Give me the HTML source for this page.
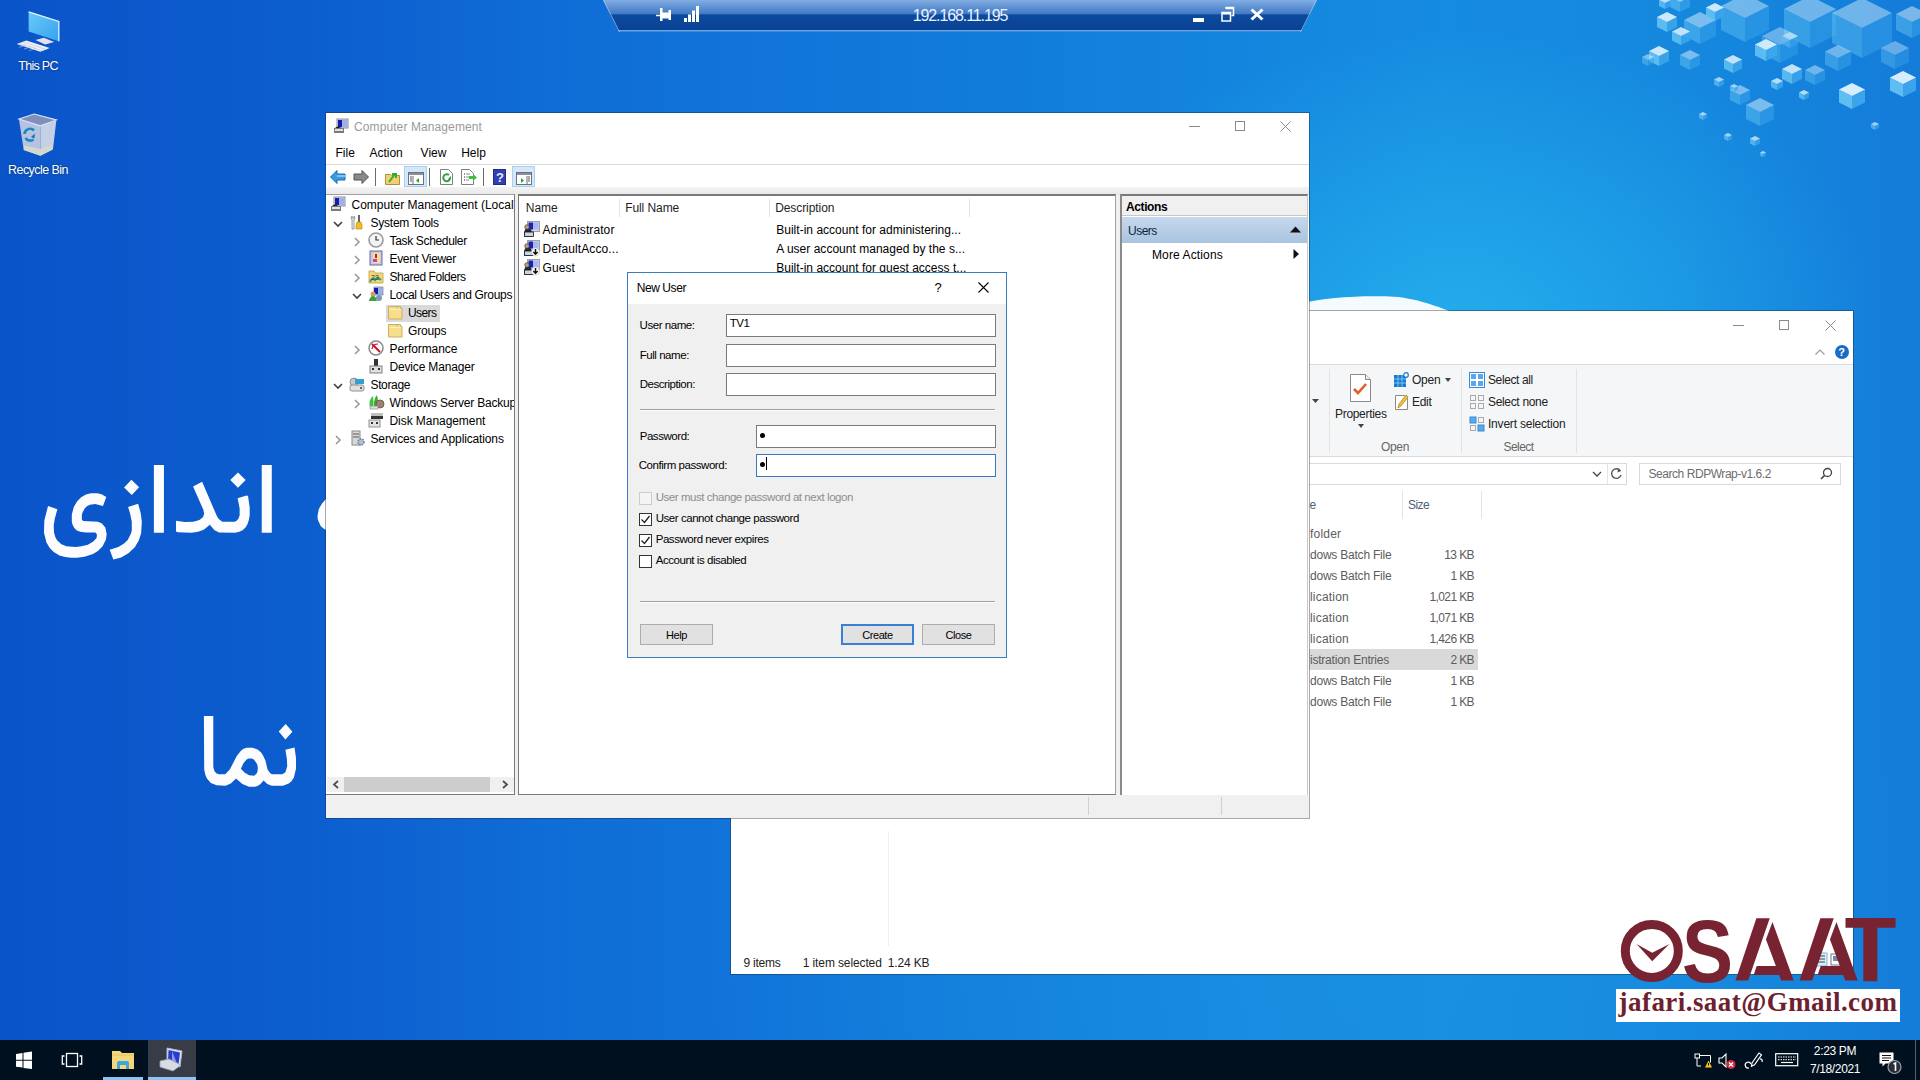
<!DOCTYPE html>
<html><head><meta charset="utf-8">
<style>
*{box-sizing:border-box;margin:0;padding:0}
html,body{width:1920px;height:1080px;overflow:hidden}
body{position:relative;font-family:"Liberation Sans",sans-serif;font-size:12px;color:#000;
background:linear-gradient(90deg,rgb(10,84,201) 0%,rgb(12,93,206) 15%,rgb(16,110,215) 30%,rgb(18,128,220) 57%,rgb(22,140,224) 75%,rgb(21,136,222) 88%,rgb(20,124,217) 100%);}
.a{position:absolute}
.t{position:absolute;white-space:nowrap;line-height:1}
svg.a{overflow:visible}
</style></head><body>
<div class="a" style="left:0;top:0;width:1920px;height:1040px;background:radial-gradient(ellipse 420px 300px at 1460px 330px,rgba(38,178,238,.85),rgba(38,178,238,0)),radial-gradient(ellipse 600px 700px at 1300px 900px,rgba(30,150,228,.5),rgba(30,150,228,0))"></div>
<svg class="a" style="left:0;top:0" width="1920" height="400"><path d="M1300 303.5C1325 298 1350 295.8 1385 296.3 1410 297 1425 302 1452 312H1300z" fill="#f4fbff"/></svg>
<svg class="a" style="left:0;top:0" width="1920" height="200"><g opacity="0.45"><path d="M1721 6.0 L1745 18 L1745 42 L1721 30.0 Z" fill="#62c2f4"/><path d="M1745 18 L1769 6.0 L1769 30.0 L1745 42 Z" fill="#3ea6ec"/><path d="M1721 6.0 L1745 -6 L1769 6.0 L1745 18 Z" fill="#dff4ff"/></g><g opacity="0.45"><path d="M1784 9.0 L1810 22 L1810 48 L1784 35.0 Z" fill="#62c2f4"/><path d="M1810 22 L1836 9.0 L1836 35.0 L1810 48 Z" fill="#3ea6ec"/><path d="M1784 9.0 L1810 -4 L1836 9.0 L1810 22 Z" fill="#dff4ff"/></g><g opacity="0.45"><path d="M1832 13.0 L1862 28 L1862 58 L1832 43.0 Z" fill="#62c2f4"/><path d="M1862 28 L1892 13.0 L1892 43.0 L1862 58 Z" fill="#3ea6ec"/><path d="M1832 13.0 L1862 -2 L1892 13.0 L1862 28 Z" fill="#dff4ff"/></g><g opacity="0.5"><path d="M1684 20.0 L1700 28 L1700 44 L1684 36.0 Z" fill="#62c2f4"/><path d="M1700 28 L1716 20.0 L1716 36.0 L1700 44 Z" fill="#3ea6ec"/><path d="M1684 20.0 L1700 12 L1716 20.0 L1700 28 Z" fill="#dff4ff"/></g><g opacity="0.5"><path d="M1746 105.0 L1760 112 L1760 126 L1746 119.0 Z" fill="#62c2f4"/><path d="M1760 112 L1774 105.0 L1774 119.0 L1760 126 Z" fill="#3ea6ec"/><path d="M1746 105.0 L1760 98 L1774 105.0 L1760 112 Z" fill="#dff4ff"/></g><g opacity="0.5"><path d="M1896 14.0 L1912 22 L1912 38 L1896 30.0 Z" fill="#62c2f4"/><path d="M1912 22 L1928 14.0 L1928 30.0 L1912 38 Z" fill="#3ea6ec"/><path d="M1896 14.0 L1912 6 L1928 14.0 L1912 22 Z" fill="#dff4ff"/></g><g opacity="0.45"><path d="M1825 51.5 L1838 58 L1838 71 L1825 64.5 Z" fill="#62c2f4"/><path d="M1838 58 L1851 51.5 L1851 64.5 L1838 71 Z" fill="#3ea6ec"/><path d="M1825 51.5 L1838 45 L1851 51.5 L1838 58 Z" fill="#dff4ff"/></g><g opacity="0.4"><path d="M1762 36.0 L1780 45 L1780 63 L1762 54.0 Z" fill="#62c2f4"/><path d="M1780 45 L1798 36.0 L1798 54.0 L1780 63 Z" fill="#3ea6ec"/><path d="M1762 36.0 L1780 27 L1798 36.0 L1780 45 Z" fill="#dff4ff"/></g><g opacity="0.4"><path d="M1881 48.0 L1895 55 L1895 69 L1881 62.0 Z" fill="#62c2f4"/><path d="M1895 55 L1909 48.0 L1909 62.0 L1895 69 Z" fill="#3ea6ec"/><path d="M1881 48.0 L1895 41 L1909 48.0 L1895 55 Z" fill="#dff4ff"/></g><g opacity="0.5"><path d="M1680 55.0 L1690 60 L1690 70 L1680 65.0 Z" fill="#62c2f4"/><path d="M1690 60 L1700 55.0 L1700 65.0 L1690 70 Z" fill="#3ea6ec"/><path d="M1680 55.0 L1690 50 L1700 55.0 L1690 60 Z" fill="#dff4ff"/></g><g opacity="0.5"><path d="M1730 90.0 L1740 95 L1740 105 L1730 100.0 Z" fill="#62c2f4"/><path d="M1740 95 L1750 90.0 L1750 100.0 L1740 105 Z" fill="#3ea6ec"/><path d="M1730 90.0 L1740 85 L1750 90.0 L1740 95 Z" fill="#dff4ff"/></g><g opacity="0.45"><path d="M1805 70.0 L1815 75 L1815 85 L1805 80.0 Z" fill="#62c2f4"/><path d="M1815 75 L1825 70.0 L1825 80.0 L1815 85 Z" fill="#3ea6ec"/><path d="M1805 70.0 L1815 65 L1825 70.0 L1815 75 Z" fill="#dff4ff"/></g><g opacity="0.6"><path d="M1670 -3.0 L1680 2 L1680 12 L1670 7.0 Z" fill="#62c2f4"/><path d="M1680 2 L1690 -3.0 L1690 7.0 L1680 12 Z" fill="#3ea6ec"/><path d="M1670 -3.0 L1680 -8 L1690 -3.0 L1680 2 Z" fill="#dff4ff"/></g><g opacity="0.9"><path d="M1657 17.0 L1667 22 L1667 32 L1657 27.0 Z" fill="#62c2f4"/><path d="M1667 22 L1677 17.0 L1677 27.0 L1667 32 Z" fill="#3ea6ec"/><path d="M1657 17.0 L1667 12 L1677 17.0 L1667 22 Z" fill="#dff4ff"/></g><g opacity="0.85"><path d="M1672 31.5 L1681 36 L1681 45 L1672 40.5 Z" fill="#62c2f4"/><path d="M1681 36 L1690 31.5 L1690 40.5 L1681 45 Z" fill="#3ea6ec"/><path d="M1672 31.5 L1681 27 L1690 31.5 L1681 36 Z" fill="#dff4ff"/></g><g opacity="0.9"><path d="M1649 51.0 L1659 56 L1659 66 L1649 61.0 Z" fill="#62c2f4"/><path d="M1659 56 L1669 51.0 L1669 61.0 L1659 66 Z" fill="#3ea6ec"/><path d="M1649 51.0 L1659 46 L1669 51.0 L1659 56 Z" fill="#dff4ff"/></g><g opacity="0.9"><path d="M1706 7.5 L1715 12 L1715 21 L1706 16.5 Z" fill="#62c2f4"/><path d="M1715 12 L1724 7.5 L1724 16.5 L1715 21 Z" fill="#3ea6ec"/><path d="M1706 7.5 L1715 3 L1724 7.5 L1715 12 Z" fill="#dff4ff"/></g><g opacity="0.9"><path d="M1755 44.5 L1766 50 L1766 61 L1755 55.5 Z" fill="#62c2f4"/><path d="M1766 50 L1777 44.5 L1777 55.5 L1766 61 Z" fill="#3ea6ec"/><path d="M1755 44.5 L1766 39 L1777 44.5 L1766 50 Z" fill="#dff4ff"/></g><g opacity="0.85"><path d="M1724 59.5 L1733 64 L1733 73 L1724 68.5 Z" fill="#62c2f4"/><path d="M1733 64 L1742 59.5 L1742 68.5 L1733 73 Z" fill="#3ea6ec"/><path d="M1724 59.5 L1733 55 L1742 59.5 L1733 64 Z" fill="#dff4ff"/></g><g opacity="0.85"><path d="M1782 69.0 L1792 74 L1792 84 L1782 79.0 Z" fill="#62c2f4"/><path d="M1792 74 L1802 69.0 L1802 79.0 L1792 84 Z" fill="#3ea6ec"/><path d="M1782 69.0 L1792 64 L1802 69.0 L1792 74 Z" fill="#dff4ff"/></g><g opacity="0.95"><path d="M1839 89.5 L1852 96 L1852 109 L1839 102.5 Z" fill="#62c2f4"/><path d="M1852 96 L1865 89.5 L1865 102.5 L1852 109 Z" fill="#3ea6ec"/><path d="M1839 89.5 L1852 83 L1865 89.5 L1852 96 Z" fill="#dff4ff"/></g><g opacity="0.95"><path d="M1890 77.5 L1903 84 L1903 97 L1890 90.5 Z" fill="#62c2f4"/><path d="M1903 84 L1916 77.5 L1916 90.5 L1903 97 Z" fill="#3ea6ec"/><path d="M1890 77.5 L1903 71 L1916 77.5 L1903 84 Z" fill="#dff4ff"/></g><g opacity="0.8"><path d="M1771 81.0 L1777 84 L1777 90 L1771 87.0 Z" fill="#62c2f4"/><path d="M1777 84 L1783 81.0 L1783 87.0 L1777 90 Z" fill="#3ea6ec"/><path d="M1771 81.0 L1777 78 L1783 81.0 L1777 84 Z" fill="#dff4ff"/></g><g opacity="0.8"><path d="M1799 92.5 L1804 95 L1804 100 L1799 97.5 Z" fill="#62c2f4"/><path d="M1804 95 L1809 92.5 L1809 97.5 L1804 100 Z" fill="#3ea6ec"/><path d="M1799 92.5 L1804 90 L1809 92.5 L1804 95 Z" fill="#dff4ff"/></g><g opacity="0.7"><path d="M1714 79.5 L1719 82 L1719 87 L1714 84.5 Z" fill="#62c2f4"/><path d="M1719 82 L1724 79.5 L1724 84.5 L1719 87 Z" fill="#3ea6ec"/><path d="M1714 79.5 L1719 77 L1724 79.5 L1719 82 Z" fill="#dff4ff"/></g><g opacity="0.7"><path d="M1730 86.0 L1734 88 L1734 92 L1730 90.0 Z" fill="#62c2f4"/><path d="M1734 88 L1738 86.0 L1738 90.0 L1734 92 Z" fill="#3ea6ec"/><path d="M1730 86.0 L1734 84 L1738 86.0 L1734 88 Z" fill="#dff4ff"/></g><g opacity="0.7"><path d="M1699 114.0 L1703 116 L1703 120 L1699 118.0 Z" fill="#62c2f4"/><path d="M1703 116 L1707 114.0 L1707 118.0 L1703 120 Z" fill="#3ea6ec"/><path d="M1699 114.0 L1703 112 L1707 114.0 L1703 116 Z" fill="#dff4ff"/></g><g opacity="0.7"><path d="M1724 135.0 L1728 137 L1728 141 L1724 139.0 Z" fill="#62c2f4"/><path d="M1728 137 L1732 135.0 L1732 139.0 L1728 141 Z" fill="#3ea6ec"/><path d="M1724 135.0 L1728 133 L1732 135.0 L1728 137 Z" fill="#dff4ff"/></g><g opacity="0.75"><path d="M1750 138.5 L1755 141 L1755 146 L1750 143.5 Z" fill="#62c2f4"/><path d="M1755 141 L1760 138.5 L1760 143.5 L1755 146 Z" fill="#3ea6ec"/><path d="M1750 138.5 L1755 136 L1760 138.5 L1755 141 Z" fill="#dff4ff"/></g><g opacity="0.7"><path d="M1760 152.5 L1763 154 L1763 157 L1760 155.5 Z" fill="#62c2f4"/><path d="M1763 154 L1766 152.5 L1766 155.5 L1763 157 Z" fill="#3ea6ec"/><path d="M1760 152.5 L1763 151 L1766 152.5 L1763 154 Z" fill="#dff4ff"/></g><g opacity="0.7"><path d="M1871 124.0 L1875 126 L1875 130 L1871 128.0 Z" fill="#62c2f4"/><path d="M1875 126 L1879 124.0 L1879 128.0 L1875 130 Z" fill="#3ea6ec"/><path d="M1871 124.0 L1875 122 L1879 124.0 L1875 126 Z" fill="#dff4ff"/></g><g opacity="0.8"><path d="M1659 0.0 L1665 3 L1665 9 L1659 6.0 Z" fill="#62c2f4"/><path d="M1665 3 L1671 0.0 L1671 6.0 L1665 9 Z" fill="#3ea6ec"/><path d="M1659 0.0 L1665 -3 L1671 0.0 L1665 3 Z" fill="#dff4ff"/></g><g opacity="0.5"><path d="M1642 57.0 L1648 60 L1648 66 L1642 63.0 Z" fill="#62c2f4"/><path d="M1648 60 L1654 57.0 L1654 63.0 L1648 66 Z" fill="#3ea6ec"/><path d="M1642 57.0 L1648 54 L1654 57.0 L1648 60 Z" fill="#dff4ff"/></g><g opacity="0.5"><path d="M1782 36.0 L1790 40 L1790 48 L1782 44.0 Z" fill="#62c2f4"/><path d="M1790 40 L1798 36.0 L1798 44.0 L1790 48 Z" fill="#3ea6ec"/><path d="M1782 36.0 L1790 32 L1798 36.0 L1790 40 Z" fill="#dff4ff"/></g></svg>
<svg class="a" style="left:0;top:0" width="400" height="850"><path fill="#fdfdff" fill-rule="evenodd" transform="translate(44 465) scale(0.335 0.336) translate(-114 -115)" d="M395 230 L365 240 L371 259 L376 284 L376 309 L374 318 L364 338 L353 349 L336 359 L310 367 L321 396 L344 390 L366 378 L385 360 L397 340 L404 318 L406 285 L403 259Z M286 202 L273 199 L254 199 L239 203 L225 211 L213 223 L203 240 L197 262 L197 283 L199 292 L204 302 L211 309 L222 314 L239 316 L267 316 L272 321 L271 332 L261 343 L245 352 L226 357 L209 359 L181 357 L166 351 L153 339 L148 330 L144 317 L143 296 L146 276 L154 247 L126 237 L115 280 L114 317 L121 345 L131 362 L143 374 L160 384 L177 389 L195 391 L213 391 L235 388 L260 380 L275 371 L289 357 L299 337 L301 320 L297 301 L287 289 L275 284 L231 282 L227 277 L227 264 L229 256 L235 245 L242 238 L251 233 L267 231 L290 237 L300 210Z M508 281 L508 313 L514 315 L554 317 L574 314 L592 307 L609 293 L623 309 L637 316 L684 317 L697 314 L707 309 L716 300 L721 292 L726 277 L728 264 L728 241 L723 207 L719 206 L692 214 L698 244 L698 265 L694 276 L688 282 L683 284 L646 284 L635 275 L630 267 L586 165 L559 179 L590 249 L592 260 L589 270 L578 279 L560 284 L534 285Z M375 159 L353 182 L376 204 L398 181Z M693 137 L670 160 L693 183 L716 160Z M764 115 L764 317 L794 317 L794 115Z M442 115 L442 317 L472 317 L472 115Z"/><path fill="#fdfdff" fill-rule="evenodd" transform="translate(317.5 485.5) scale(0.335 0.336) translate(-113 -177)" d="M160 177 L141 201 L146 206 L145 209 L126 231 L117 247 L113 268 L114 279 L123 298 L132 306 L143 312 L159 316 L188 315 L206 308 L222 292 L228 275 L228 255 L220 235 L207 218 L186 198Z M169 226 L190 245 L199 260 L199 269 L196 276 L190 281 L181 284 L162 284 L151 280 L143 270 L143 261 L146 253 L157 238Z"/><path fill="#fdfdff" fill-rule="evenodd" transform="translate(203.9 716) scale(0.303 0.345) translate(-121 -115)" d="M391 138 L368 160 L390 183 L413 161Z M121 115 L122 270 L126 286 L131 296 L144 309 L163 316 L193 317 L211 310 L227 296 L248 312 L270 320 L290 320 L298 318 L307 313 L318 302 L330 312 L345 317 L382 317 L401 311 L410 304 L418 293 L425 267 L425 237 L420 206 L390 213 L395 241 L396 261 L390 278 L380 284 L346 284 L340 281 L331 270 L324 244 L315 227 L309 220 L298 212 L282 207 L262 207 L252 210 L244 215 L230 230 L207 269 L194 282 L190 284 L170 284 L162 281 L156 275 L152 263 L152 115Z M268 238 L279 238 L286 241 L297 255 L299 265 L298 276 L295 282 L287 288 L270 287 L255 279 L243 268 L252 251 L262 241Z"/></svg>
<div class="a" style="left:730px;top:310px;width:1124px;height:665px;background:#fff padding-box;border:1px solid rgba(30,30,40,.38)"></div>
<div class="a" style="left:1733px;top:325px;width:11px;height:1px;background:#8a8a8a"></div>
<div class="a" style="left:1779px;top:320px;width:10px;height:10px;border:1px solid #8a8a8a"></div>
<svg class="a" style="left:1825px;top:320px;" width="11" height="11" viewBox="0 0 11 11"><path d="M0.5 0.5l10 10M10.5 0.5l-10 10" stroke="#8a8a8a" stroke-width="1"/></svg>
<svg class="a" style="left:1815px;top:349px;" width="10" height="6" viewBox="0 0 10 6"><path d="M0.5 5.5L5 1l4.5 4.5" stroke="#9a9a9a" stroke-width="1.2" fill="none"/></svg>
<div class="a" style="left:1835px;top:345px;width:14px;height:14px;border-radius:50%;background:#1a6dc4"></div>
<div class="t" style="left:1838.2px;top:347.19px;font-size:11px;color:#fff;font-weight:700;font-family:'Liberation Sans',sans-serif;">?</div>
<div class="a" style="left:731px;top:364px;width:1122px;height:93px;background:#f5f6f7;border-top:1px solid #dadbdc;border-bottom:1px solid #dadbdc"></div>
<div class="a" style="left:1329px;top:369px;width:1px;height:84px;background:#e2e3e4"></div>
<div class="a" style="left:1461px;top:369px;width:1px;height:84px;background:#e2e3e4"></div>
<div class="a" style="left:1576px;top:369px;width:1px;height:84px;background:#e2e3e4"></div>
<svg class="a" style="left:1312px;top:399px;" width="7" height="4" viewBox="0 0 7 4"><path d="M0 0h7L3.5 4z" fill="#444"/></svg>
<svg class="a" style="left:1349px;top:373px;" width="24" height="30" viewBox="0 0 24 30"><path d="M1.5 1.5h15l5 5v22h-20z" fill="#fff" stroke="#8a8a8a"/><path d="M16.5 1.5v5h5" fill="#eee" stroke="#8a8a8a"/><path d="M5 16l4 4 8-9" stroke="#e0602a" stroke-width="2.6" fill="none"/></svg>
<div class="t" style="left:1335px;top:407.84px;font-size:12px;color:#222;font-weight:400;font-family:'Liberation Sans',sans-serif;letter-spacing:-0.31px">Properties</div>
<svg class="a" style="left:1358px;top:424px;" width="6" height="4" viewBox="0 0 6 4"><path d="M0 0h6L3 4z" fill="#444"/></svg>
<svg class="a" style="left:1393px;top:372px;" width="16" height="16" viewBox="0 0 16 16"><rect x="1" y="3" width="12" height="12" fill="#1a7ad0"/><path d="M1 7h12M1 11h12M5 3v12M9 3v12" stroke="#7ac0f0" stroke-width="1"/><circle cx="13" cy="3" r="2.3" fill="#fff" stroke="#1a7ad0" stroke-width="1.2"/></svg>
<div class="t" style="left:1412px;top:374.44px;font-size:12px;color:#222;font-weight:400;font-family:'Liberation Sans',sans-serif;letter-spacing:-0.26px">Open</div>
<svg class="a" style="left:1445px;top:378px;" width="6" height="4" viewBox="0 0 6 4"><path d="M0 0h6L3 4z" fill="#444"/></svg>
<svg class="a" style="left:1395px;top:393px;" width="14" height="17" viewBox="0 0 14 17"><path d="M.5 2.5h9l3 3v11h-12z" fill="#fff" stroke="#8a8a8a"/><path d="M3 15l1-4 7-9 2 2-7 9z" fill="#f0c040" stroke="#b08820" stroke-width=".8"/></svg>
<div class="t" style="left:1412px;top:396.24px;font-size:12px;color:#222;font-weight:400;font-family:'Liberation Sans',sans-serif;letter-spacing:-0.3px">Edit</div>
<div class="t" style="left:1329px;top:440.84px;width:132px;text-align:center;font-size:12px;color:#666;letter-spacing:-0.3px">Open</div>
<svg class="a" style="left:1469px;top:372px;" width="16" height="16" viewBox="0 0 16 16"><rect x=".5" y=".5" width="15" height="15" fill="#fff" stroke="#3a8ad8"/><rect x="2" y="2" width="5" height="5" fill="#5aa8ec"/><rect x="9" y="2" width="5" height="5" fill="#5aa8ec"/><rect x="2" y="9" width="5" height="5" fill="#5aa8ec"/><rect x="9" y="9" width="5" height="5" fill="#5aa8ec"/></svg>
<div class="t" style="left:1488px;top:374.44px;font-size:12px;color:#222;font-weight:400;font-family:'Liberation Sans',sans-serif;letter-spacing:-0.4px">Select all</div>
<svg class="a" style="left:1469px;top:394px;" width="16" height="16" viewBox="0 0 16 16"><rect x="1.5" y="1.5" width="5" height="5" fill="none" stroke="#aaa"/><rect x="9.5" y="1.5" width="5" height="5" fill="none" stroke="#aaa"/><rect x="1.5" y="9.5" width="5" height="5" fill="none" stroke="#aaa"/><rect x="9.5" y="9.5" width="5" height="5" fill="none" stroke="#aaa"/></svg>
<div class="t" style="left:1488px;top:396.24px;font-size:12px;color:#222;font-weight:400;font-family:'Liberation Sans',sans-serif;letter-spacing:-0.33px">Select none</div>
<svg class="a" style="left:1469px;top:416px;" width="16" height="16" viewBox="0 0 16 16"><rect x="1" y="1" width="6" height="6" fill="#5aa8ec" stroke="#3a8ad8"/><rect x="9.5" y="1.5" width="5" height="5" fill="none" stroke="#aaa"/><rect x="1.5" y="9.5" width="5" height="5" fill="none" stroke="#aaa"/><rect x="9" y="9" width="6" height="6" fill="#5aa8ec" stroke="#3a8ad8"/></svg>
<div class="t" style="left:1488px;top:418.14px;font-size:12px;color:#222;font-weight:400;font-family:'Liberation Sans',sans-serif;letter-spacing:-0.21px">Invert selection</div>
<div class="t" style="left:1461px;top:440.84px;width:115px;text-align:center;font-size:12px;color:#666;letter-spacing:-0.55px">Select</div>
<div class="a" style="left:731px;top:463px;width:896px;height:22px;background:#fff;border:1px solid #d9d9d9;border-left:none"></div>
<div class="a" style="left:1607px;top:464px;width:1px;height:20px;background:#e5e5e5"></div>
<svg class="a" style="left:1592px;top:471px;" width="10" height="6" viewBox="0 0 10 6"><path d="M1 1l4 4 4-4" stroke="#444" stroke-width="1.3" fill="none"/></svg>
<svg class="a" style="left:1610px;top:467px;" width="13" height="13" viewBox="0 0 13 13"><path d="M10.5 4A4.8 4.8 0 1 0 11 8" stroke="#555" stroke-width="1.3" fill="none"/><path d="M8 1.5l3 2.5-3.5 1.5" fill="#555"/></svg>
<div class="a" style="left:1639px;top:463px;width:202px;height:22px;background:#fff;border:1px solid #d9d9d9"></div>
<div class="t" style="left:1648.5px;top:468.24px;font-size:12px;color:#6d6d6d;font-weight:400;font-family:'Liberation Sans',sans-serif;letter-spacing:-0.45px">Search RDPWrap-v1.6.2</div>
<svg class="a" style="left:1820px;top:467px;" width="13" height="13" viewBox="0 0 13 13"><circle cx="7.5" cy="5.5" r="4" stroke="#444" stroke-width="1.3" fill="none"/><path d="M4.6 8.4L1 12" stroke="#444" stroke-width="1.6"/></svg>
<div class="t" style="left:1309.5px;top:499.14px;font-size:12px;color:#4c607a;font-weight:400;font-family:'Liberation Sans',sans-serif;letter-spacing:-0.22px">e</div>
<div class="t" style="left:1408px;top:499.14px;font-size:12px;color:#4c607a;font-weight:400;font-family:'Liberation Sans',sans-serif;letter-spacing:-0.55px">Size</div>
<div class="a" style="left:1402px;top:491px;width:1px;height:28px;background:#e5e5e5"></div>
<div class="a" style="left:1481px;top:491px;width:1px;height:28px;background:#e5e5e5"></div>
<div class="t" style="left:1310px;top:527.74px;font-size:12px;color:#5c5c5c;font-weight:400;font-family:'Liberation Sans',sans-serif;letter-spacing:0.2px">folder</div>
<div class="t" style="left:1310px;top:548.74px;font-size:12px;color:#5c5c5c;font-weight:400;font-family:'Liberation Sans',sans-serif;letter-spacing:-0.22px">dows Batch File</div>
<div class="t" style="left:1380px;top:548.74px;width:94px;text-align:right;font-size:12px;color:#5c5c5c;letter-spacing:-0.6px">13 KB</div>
<div class="t" style="left:1310px;top:569.74px;font-size:12px;color:#5c5c5c;font-weight:400;font-family:'Liberation Sans',sans-serif;letter-spacing:-0.22px">dows Batch File</div>
<div class="t" style="left:1380px;top:569.74px;width:94px;text-align:right;font-size:12px;color:#5c5c5c;letter-spacing:-0.6px">1 KB</div>
<div class="t" style="left:1310px;top:590.74px;font-size:12px;color:#5c5c5c;font-weight:400;font-family:'Liberation Sans',sans-serif;letter-spacing:0.2px">lication</div>
<div class="t" style="left:1380px;top:590.74px;width:94px;text-align:right;font-size:12px;color:#5c5c5c;letter-spacing:-0.6px">1,021 KB</div>
<div class="t" style="left:1310px;top:611.74px;font-size:12px;color:#5c5c5c;font-weight:400;font-family:'Liberation Sans',sans-serif;letter-spacing:0.2px">lication</div>
<div class="t" style="left:1380px;top:611.74px;width:94px;text-align:right;font-size:12px;color:#5c5c5c;letter-spacing:-0.6px">1,071 KB</div>
<div class="t" style="left:1310px;top:632.74px;font-size:12px;color:#5c5c5c;font-weight:400;font-family:'Liberation Sans',sans-serif;letter-spacing:0.2px">lication</div>
<div class="t" style="left:1380px;top:632.74px;width:94px;text-align:right;font-size:12px;color:#5c5c5c;letter-spacing:-0.6px">1,426 KB</div>
<div class="a" style="left:1309px;top:649px;width:169px;height:21px;background:#d9d9d9"></div>
<div class="t" style="left:1310px;top:653.74px;font-size:12px;color:#5c5c5c;font-weight:400;font-family:'Liberation Sans',sans-serif;letter-spacing:-0.22px">istration Entries</div>
<div class="t" style="left:1380px;top:653.74px;width:94px;text-align:right;font-size:12px;color:#5c5c5c;letter-spacing:-0.6px">2 KB</div>
<div class="t" style="left:1310px;top:674.74px;font-size:12px;color:#5c5c5c;font-weight:400;font-family:'Liberation Sans',sans-serif;letter-spacing:-0.22px">dows Batch File</div>
<div class="t" style="left:1380px;top:674.74px;width:94px;text-align:right;font-size:12px;color:#5c5c5c;letter-spacing:-0.6px">1 KB</div>
<div class="t" style="left:1310px;top:695.74px;font-size:12px;color:#5c5c5c;font-weight:400;font-family:'Liberation Sans',sans-serif;letter-spacing:-0.22px">dows Batch File</div>
<div class="t" style="left:1380px;top:695.74px;width:94px;text-align:right;font-size:12px;color:#5c5c5c;letter-spacing:-0.6px">1 KB</div>
<div class="a" style="left:888px;top:831px;width:1px;height:115px;background:#f0f0f0"></div>
<div class="t" style="left:743.4px;top:957.34px;font-size:12px;color:#222;font-weight:400;font-family:'Liberation Sans',sans-serif;letter-spacing:-0.22px">9 items</div>
<div class="t" style="left:802.8px;top:957.34px;font-size:12px;color:#222;font-weight:400;font-family:'Liberation Sans',sans-serif;letter-spacing:-0.12px">1 item selected</div>
<div class="t" style="left:887.7px;top:957.34px;font-size:12px;color:#222;font-weight:400;font-family:'Liberation Sans',sans-serif;letter-spacing:-0.15px">1.24 KB</div>
<svg class="a" style="left:1814px;top:952px;" width="30" height="16" viewBox="0 0 30 16"><rect x="1" y="1" width="12" height="13" fill="#d8ecfa" stroke="#7ab8e8"/><path d="M3 4h8M3 7h8M3 10h8" stroke="#444" stroke-width="1"/><rect x="17" y="2" width="11" height="11" fill="none" stroke="#777"/><rect x="19" y="4" width="7" height="5" fill="#6a8aa8"/></svg>
<div class="a" style="left:325px;top:112px;width:985px;height:707px;background:#fff padding-box;border:1px solid rgba(30,30,40,.38)"></div>
<svg class="a" style="left:333px;top:118px;" width="16" height="16" viewBox="0 0 16 16"><rect x="4" y="1" width="11" height="9" fill="#d8dce8" stroke="#8a8f9a"/><rect x="5" y="2" width="9" height="7" fill="#9ab0ef"/><path d="M5 2h4v7H5z" fill="#1a1aa8"/><rect x="1" y="10" width="10" height="5" fill="#7a7a7a"/><rect x="2" y="11" width="8" height="2" fill="#e0e0e0"/><path d="M2 10 q3 -3 6 0" fill="#222"/></svg>
<div class="t" style="left:354px;top:120.64px;font-size:12px;color:#9a9a9a;font-weight:400;font-family:'Liberation Sans',sans-serif;letter-spacing:0.1px">Computer Management</div>
<div class="a" style="left:1189px;top:126px;width:11px;height:1px;background:#8a8a8a"></div>
<div class="a" style="left:1235px;top:121px;width:10px;height:10px;border:1px solid #8a8a8a"></div>
<svg class="a" style="left:1280px;top:121px;" width="11" height="11" viewBox="0 0 11 11"><path d="M0.5 0.5l10 10M10.5 0.5l-10 10" stroke="#8a8a8a" stroke-width="1"/></svg>
<div class="t" style="left:335.5px;top:146.74px;font-size:12px;color:#000;font-weight:400;font-family:'Liberation Sans',sans-serif;">File</div>
<div class="t" style="left:369.4px;top:146.74px;font-size:12px;color:#000;font-weight:400;font-family:'Liberation Sans',sans-serif;">Action</div>
<div class="t" style="left:420.6px;top:146.74px;font-size:12px;color:#000;font-weight:400;font-family:'Liberation Sans',sans-serif;">View</div>
<div class="t" style="left:461.2px;top:146.74px;font-size:12px;color:#000;font-weight:400;font-family:'Liberation Sans',sans-serif;">Help</div>
<div class="a" style="left:326px;top:164px;width:983px;height:1px;background:#dadada"></div>
<svg class="a" style="left:330px;top:170px;" width="16" height="14" viewBox="0 0 16 14"><path d="M0.5 7L7 0.5V4H15V10H7v3.5z" fill="#3a9ae0" stroke="#1a6ab0" stroke-width="1"/><path d="M7 5h8v2H7z" fill="#7ac4f4"/></svg>
<svg class="a" style="left:353px;top:170px;" width="16" height="14" viewBox="0 0 16 14"><path d="M15.5 7L9 0.5V4H1V10H9v3.5z" fill="#8a8a8a" stroke="#555" stroke-width="1"/></svg>
<div class="a" style="left:375px;top:168px;width:1px;height:18px;background:#6a6a6a"></div>
<svg class="a" style="left:385px;top:171px;" width="15" height="14" viewBox="0 0 15 14"><path d="M0.5 3.5h5l1 1h8v9h-14z" fill="#f0d070" stroke="#b09040"/><path d="M4 11l6-8M7 3h4v4" stroke="#30b030" stroke-width="2" fill="none"/></svg>
<div class="a" style="left:404px;top:166px;width:23px;height:21px;background:#d4e8f8;border:1px solid #a8d0f0"></div>
<svg class="a" style="left:408px;top:172px;" width="16" height="13" viewBox="0 0 16 13"><rect x=".5" y=".5" width="15" height="12" fill="#fff" stroke="#6a7080"/><rect x="1" y="1" width="14" height="2" fill="#8a90a0"/><path d="M5 4v8" stroke="#6a7080"/><path d="M2 5h2M2 7h2M2 9h2" stroke="#555"/><path d="M11 6l-3 2.5 3 2.5z" fill="#30a030"/></svg>
<div class="a" style="left:429px;top:168px;width:1px;height:18px;background:#6a6a6a"></div>
<svg class="a" style="left:440px;top:169px;" width="13" height="16" viewBox="0 0 13 16"><path d="M.5 .5h8l4 4v11h-12z" fill="#fff" stroke="#808080"/><path d="M9 6a3.5 3.5 0 1 0 1 4" stroke="#30a040" stroke-width="2" fill="none"/><path d="M8 10h3v-3z" fill="#30a040"/></svg>
<svg class="a" style="left:461px;top:169px;" width="16" height="16" viewBox="0 0 16 16"><path d="M.5 .5h8l4 4v11h-12z" fill="#fff" stroke="#808080"/><path d="M3 5h1M3 8h1M3 11h1" stroke="#222"/><path d="M5 5h4M5 8h3M5 11h3" stroke="#888"/><path d="M8 7h4v-2l4 3.5-4 3.5v-2H8z" fill="#40c040"/></svg>
<div class="a" style="left:483px;top:168px;width:1px;height:18px;background:#6a6a6a"></div>
<svg class="a" style="left:493px;top:169px;" width="13" height="16" viewBox="0 0 13 16"><rect x=".5" y=".5" width="12" height="15" fill="#3040b0" stroke="#20307a"/><text x="3" y="13" font-size="13" font-weight="bold" fill="#e8ecff" font-family="Liberation Sans">?</text></svg>
<div class="a" style="left:512px;top:166px;width:23px;height:21px;background:#d4e8f8;border:1px solid #a8d0f0"></div>
<svg class="a" style="left:516px;top:172px;" width="16" height="13" viewBox="0 0 16 13"><rect x=".5" y=".5" width="15" height="12" fill="#fff" stroke="#6a7080"/><rect x="1" y="1" width="14" height="2" fill="#8a90a0"/><path d="M11 4v8" stroke="#6a7080"/><path d="M12 5h2M12 7h2M12 9h2" stroke="#555"/><path d="M5 6l3 2.5-3 2.5z" fill="#30a030"/></svg>
<div class="a" style="left:326px;top:187px;width:983px;height:8px;background:linear-gradient(#f4f4f4,#e8e8e8)"></div>
<div class="a" style="left:326px;top:194px;width:189px;height:601px;background:#fff;border-right:1px solid #7a7a7a;border-bottom:1px solid #7a7a7a;border-top:1px solid #a0a0a0"></div>
<div class="a" style="left:515px;top:195px;width:3px;height:600px;background:#f0f0f0"></div>
<div class="a" style="left:327px;top:195px;width:187px;height:580px;overflow:hidden">
<svg class="a" style="left:3px;top:1.25px;" width="16" height="16" viewBox="0 0 16 16"><rect x="4" y="1" width="11" height="9" fill="#d8dce8" stroke="#8a8f9a"/><rect x="5" y="2" width="9" height="7" fill="#9ab0ef"/><path d="M5 2h4v7H5z" fill="#1a1aa8"/><rect x="1" y="10" width="10" height="5" fill="#7a7a7a"/><rect x="2" y="11" width="8" height="2" fill="#e0e0e0"/><path d="M2 10 q3 -3 6 0" fill="#222"/></svg>
<div class="t" style="left:24.5px;top:3.59px;font-size:12px;color:#000;font-weight:400;font-family:'Liberation Sans',sans-serif;letter-spacing:0px">Computer Management (Local)</div>
<svg class="a" style="left:22px;top:19.25px;" width="16" height="16" viewBox="0 0 16 16"><path d="M3 2 q-2 2 0 4 v9 h2 v-9 q2 -2 0 -4 v2 h-2z" fill="#e8e8e8" stroke="#8a8a8a" stroke-width=".8"/><rect x="9" y="1" width="2" height="7" fill="#666"/><path d="M8 8 h4 l1 3 v4 h-6 v-4z" fill="#f0c020" stroke="#b08000" stroke-width=".6"/></svg>
<svg class="a" style="left:6px;top:26.25px;" width="10" height="7" viewBox="0 0 10 7"><path d="M1 1l4 4 4-4" stroke="#404040" stroke-width="1.6" fill="none"/></svg>
<div class="t" style="left:43.5px;top:21.59px;font-size:12px;color:#000;font-weight:400;font-family:'Liberation Sans',sans-serif;letter-spacing:-0.24px">System Tools</div>
<svg class="a" style="left:41px;top:37.25px;" width="16" height="16" viewBox="0 0 16 16"><circle cx="8" cy="8" r="7" fill="#f4f4f4" stroke="#9a9a9a" stroke-width="1.6"/><path d="M8 4v4h3" stroke="#333" stroke-width="1.2" fill="none"/></svg>
<svg class="a" style="left:27px;top:41.75px;" width="7" height="10" viewBox="0 0 7 10"><path d="M1 1l4 4-4 4" stroke="#9a9a9a" stroke-width="1.6" fill="none"/></svg>
<div class="t" style="left:62.5px;top:39.59px;font-size:12px;color:#000;font-weight:400;font-family:'Liberation Sans',sans-serif;letter-spacing:-0.34px">Task Scheduler</div>
<svg class="a" style="left:41px;top:55.25px;" width="16" height="16" viewBox="0 0 16 16"><rect x="2" y="1" width="12" height="14" fill="#c8c8e8" stroke="#6a6a9a"/><rect x="5" y="3" width="7" height="10" fill="#f0e0a0"/><path d="M8 4v4" stroke="#c02020" stroke-width="2"/><rect x="5" y="9" width="4" height="3" fill="#d04090"/></svg>
<svg class="a" style="left:27px;top:59.75px;" width="7" height="10" viewBox="0 0 7 10"><path d="M1 1l4 4-4 4" stroke="#9a9a9a" stroke-width="1.6" fill="none"/></svg>
<div class="t" style="left:62.5px;top:57.59px;font-size:12px;color:#000;font-weight:400;font-family:'Liberation Sans',sans-serif;letter-spacing:-0.35px">Event Viewer</div>
<svg class="a" style="left:41px;top:73.25px;" width="16" height="16" viewBox="0 0 16 16"><path d="M1 3h5l1 2h8v10H1z" fill="#f0d878" stroke="#c0a040" stroke-width=".8"/><path d="M2 14q2-5 5-2q2-4 6 0" stroke="#30a080" stroke-width="2" fill="none"/><text x="3" y="12" font-size="7" fill="#333" font-family="Liberation Sans">23</text></svg>
<svg class="a" style="left:27px;top:77.75px;" width="7" height="10" viewBox="0 0 7 10"><path d="M1 1l4 4-4 4" stroke="#9a9a9a" stroke-width="1.6" fill="none"/></svg>
<div class="t" style="left:62.5px;top:75.59px;font-size:12px;color:#000;font-weight:400;font-family:'Liberation Sans',sans-serif;letter-spacing:-0.42px">Shared Folders</div>
<svg class="a" style="left:41px;top:91.25px;" width="16" height="16" viewBox="0 0 16 16"><rect x="6" y="1" width="9" height="8" fill="#9ab0ef" stroke="#8a8f9a" stroke-width=".8"/><path d="M6 2h4v6H6z" fill="#1a1aa8"/><circle cx="5" cy="8" r="2.5" fill="#d0a060"/><path d="M1 15q1-5 4-5t4 5z" fill="#40a040"/><circle cx="11" cy="12" r="3" fill="#7a9ac0"/></svg>
<svg class="a" style="left:25px;top:98.25px;" width="10" height="7" viewBox="0 0 10 7"><path d="M1 1l4 4 4-4" stroke="#404040" stroke-width="1.6" fill="none"/></svg>
<div class="t" style="left:62.5px;top:93.59px;font-size:12px;color:#000;font-weight:400;font-family:'Liberation Sans',sans-serif;letter-spacing:-0.31px">Local Users and Groups</div>
<div class="a" style="left:58.5px;top:109.55000000000001px;width:54px;height:17px;background:#d9d9d9"></div>
<svg class="a" style="left:60px;top:109.25px;" width="16" height="16" viewBox="0 0 16 16"><path d="M1.5 2.5h12v2h1.5v10.5h-13.5z" fill="#f6de8a" stroke="#cdb060" stroke-width="1"/><path d="M2.5 5.5h11.5" stroke="#fdf0c0" stroke-width="1"/><path d="M10 2.5v2" stroke="#cdb060"/></svg>
<div class="t" style="left:81px;top:111.59px;font-size:12px;color:#000;font-weight:400;font-family:'Liberation Sans',sans-serif;letter-spacing:-0.6px">Users</div>
<svg class="a" style="left:60px;top:127.25px;" width="16" height="16" viewBox="0 0 16 16"><path d="M1.5 2.5h12v2h1.5v10.5h-13.5z" fill="#f6de8a" stroke="#cdb060" stroke-width="1"/><path d="M2.5 5.5h11.5" stroke="#fdf0c0" stroke-width="1"/><path d="M10 2.5v2" stroke="#cdb060"/></svg>
<div class="t" style="left:81px;top:129.59px;font-size:12px;color:#000;font-weight:400;font-family:'Liberation Sans',sans-serif;letter-spacing:-0.19px">Groups</div>
<svg class="a" style="left:41px;top:145.25px;" width="16" height="16" viewBox="0 0 16 16"><circle cx="8" cy="8" r="7" fill="#fff" stroke="#8a8a8a" stroke-width="1.5"/><path d="M4 4l8 8" stroke="#d01020" stroke-width="2"/><path d="M4 9q1-5 6-5" stroke="#d01020" stroke-width="1.2" fill="none"/></svg>
<svg class="a" style="left:27px;top:149.75px;" width="7" height="10" viewBox="0 0 7 10"><path d="M1 1l4 4-4 4" stroke="#9a9a9a" stroke-width="1.6" fill="none"/></svg>
<div class="t" style="left:62.5px;top:147.59px;font-size:12px;color:#000;font-weight:400;font-family:'Liberation Sans',sans-serif;letter-spacing:-0.08px">Performance</div>
<svg class="a" style="left:41px;top:163.25px;" width="16" height="16" viewBox="0 0 16 16"><rect x="6" y="1" width="4" height="7" fill="#333"/><rect x="2" y="8" width="12" height="7" fill="#e0e0e0" stroke="#808080"/><rect x="4" y="10" width="2" height="2" fill="#333"/><rect x="10" y="10" width="2" height="2" fill="#333"/></svg>
<div class="t" style="left:62.5px;top:165.59px;font-size:12px;color:#000;font-weight:400;font-family:'Liberation Sans',sans-serif;letter-spacing:-0.17px">Device Manager</div>
<svg class="a" style="left:22px;top:181.25px;" width="16" height="16" viewBox="0 0 16 16"><circle cx="5" cy="6" r="4" fill="#c8c8c8" stroke="#909090"/><rect x="6" y="3" width="9" height="5" fill="#30a0d0"/><rect x="1" y="9" width="14" height="6" rx="2" fill="#e0e0e0" stroke="#909090"/><rect x="11" y="11" width="2" height="2" fill="#666"/></svg>
<svg class="a" style="left:6px;top:188.25px;" width="10" height="7" viewBox="0 0 10 7"><path d="M1 1l4 4 4-4" stroke="#404040" stroke-width="1.6" fill="none"/></svg>
<div class="t" style="left:43.5px;top:183.59px;font-size:12px;color:#000;font-weight:400;font-family:'Liberation Sans',sans-serif;letter-spacing:-0.36px">Storage</div>
<svg class="a" style="left:41px;top:199.25px;" width="16" height="16" viewBox="0 0 16 16"><path d="M2 14q-2-8 3-12q1 6 0 12z" fill="#40c040"/><path d="M6 14q-1-8 3-13q2 7 0 13z" fill="#30b030"/><circle cx="12" cy="10" r="4" fill="#a08070" stroke="#706050"/><rect x="2" y="12" width="8" height="3" fill="#ddd" stroke="#888" stroke-width=".6"/></svg>
<svg class="a" style="left:27px;top:203.75px;" width="7" height="10" viewBox="0 0 7 10"><path d="M1 1l4 4-4 4" stroke="#9a9a9a" stroke-width="1.6" fill="none"/></svg>
<div class="t" style="left:62.5px;top:201.59px;font-size:12px;color:#000;font-weight:400;font-family:'Liberation Sans',sans-serif;letter-spacing:-0.2px">Windows Server Backup</div>
<svg class="a" style="left:41px;top:217.25px;" width="16" height="16" viewBox="0 0 16 16"><rect x="3" y="1" width="12" height="3" fill="#c0c0c0"/><rect x="3" y="4" width="12" height="3" fill="#333"/><rect x="1" y="8" width="11" height="7" fill="#e4e4e4" stroke="#909090"/><rect x="3" y="10" width="2" height="2" fill="#333"/><rect x="8" y="10" width="2" height="2" fill="#333"/></svg>
<div class="t" style="left:62.5px;top:219.59px;font-size:12px;color:#000;font-weight:400;font-family:'Liberation Sans',sans-serif;letter-spacing:-0.06px">Disk Management</div>
<svg class="a" style="left:22px;top:235.25px;" width="16" height="16" viewBox="0 0 16 16"><rect x="3" y="1" width="8" height="14" fill="#d8d8d8" stroke="#8a8a8a"/><path d="M4 4h6M4 7h6" stroke="#555"/><circle cx="12" cy="12" r="3" fill="#b0c0d8" stroke="#6a7a98" stroke-width="1.4" stroke-dasharray="1.5 1"/></svg>
<svg class="a" style="left:8px;top:239.75px;" width="7" height="10" viewBox="0 0 7 10"><path d="M1 1l4 4-4 4" stroke="#9a9a9a" stroke-width="1.6" fill="none"/></svg>
<div class="t" style="left:43.5px;top:237.59px;font-size:12px;color:#000;font-weight:400;font-family:'Liberation Sans',sans-serif;letter-spacing:-0.14px">Services and Applications</div>
</div>
<div class="a" style="left:327px;top:777px;width:187px;height:15px;background:#f0f0f0"></div>
<div class="a" style="left:344px;top:777px;width:146px;height:15px;background:#cdcdcd"></div>
<svg class="a" style="left:332px;top:780px;" width="8" height="9" viewBox="0 0 8 9"><path d="M6 1L2 4.5 6 8" stroke="#505050" stroke-width="1.8" fill="none"/></svg>
<svg class="a" style="left:501px;top:780px;" width="8" height="9" viewBox="0 0 8 9"><path d="M2 1l4 3.5L2 8" stroke="#505050" stroke-width="1.8" fill="none"/></svg>
<div class="a" style="left:518px;top:194px;width:598px;height:601px;background:#fff;border:1px solid #7a7a7a;border-right-color:#a0a0a0;border-top-width:2px"></div>
<div class="t" style="left:525.8px;top:202.24px;font-size:12px;color:#1e1e1e;font-weight:400;font-family:'Liberation Sans',sans-serif;letter-spacing:-0.08px">Name</div>
<div class="t" style="left:625.2px;top:202.24px;font-size:12px;color:#1e1e1e;font-weight:400;font-family:'Liberation Sans',sans-serif;letter-spacing:-0.08px">Full Name</div>
<div class="t" style="left:775.2px;top:202.24px;font-size:12px;color:#1e1e1e;font-weight:400;font-family:'Liberation Sans',sans-serif;letter-spacing:-0.08px">Description</div>
<div class="a" style="left:619px;top:199px;width:1px;height:18px;background:#e4e4e4"></div>
<div class="a" style="left:769px;top:199px;width:1px;height:18px;background:#e4e4e4"></div>
<div class="a" style="left:969px;top:199px;width:1px;height:18px;background:#e4e4e4"></div>
<svg class="a" style="left:524px;top:221.25px;" width="16" height="16" viewBox="0 0 16 16"><rect x="3.5" y=".5" width="12" height="10" fill="#d4d8e0" stroke="#9aa0a8"/><rect x="4.5" y="1.5" width="4.5" height="7" fill="#1a22b4"/><rect x="9" y="1.5" width="5.5" height="7" fill="#aab6f2"/><path d="M.5 15.5V10.5q0-3 3-3h1q3 0 3 3v5z" fill="#2a2a30"/><circle cx="3" cy="6" r="2.3" fill="#b8a07a" stroke="#333" stroke-width=".6"/><rect x=".5" y="11" width="9" height="4.5" fill="#c4d4ea" stroke="#111" stroke-width=".8"/></svg>
<div class="t" style="left:542.5px;top:224.09px;font-size:12px;color:#000;font-weight:400;font-family:'Liberation Sans',sans-serif;letter-spacing:0.1px">Administrator</div>
<div class="t" style="left:776.2px;top:224.09px;font-size:12px;color:#000;font-weight:400;font-family:'Liberation Sans',sans-serif;letter-spacing:0.02px">Built-in account for administering...</div>
<svg class="a" style="left:524px;top:240.0px;" width="16" height="16" viewBox="0 0 16 16"><rect x="3.5" y=".5" width="12" height="10" fill="#d4d8e0" stroke="#9aa0a8"/><rect x="4.5" y="1.5" width="4.5" height="7" fill="#1a22b4"/><rect x="9" y="1.5" width="5.5" height="7" fill="#aab6f2"/><path d="M.5 15.5V10.5q0-3 3-3h1q3 0 3 3v5z" fill="#2a2a30"/><circle cx="3" cy="6" r="2.3" fill="#b8a07a" stroke="#333" stroke-width=".6"/><rect x=".5" y="11" width="9" height="4.5" fill="#c4d4ea" stroke="#111" stroke-width=".8"/><circle cx="11.5" cy="12" r="4" fill="#fff" stroke="#bbb" stroke-width=".6"/><path d="M11.5 9v5.2M9.3 12l2.2 2.2 2.2-2.2" stroke="#111" stroke-width="1.5" fill="none"/></svg>
<div class="t" style="left:542.5px;top:242.84px;font-size:12px;color:#000;font-weight:400;font-family:'Liberation Sans',sans-serif;letter-spacing:0.1px">DefaultAcco...</div>
<div class="t" style="left:776.2px;top:242.84px;font-size:12px;color:#000;font-weight:400;font-family:'Liberation Sans',sans-serif;letter-spacing:0.02px">A user account managed by the s...</div>
<svg class="a" style="left:524px;top:258.75px;" width="16" height="16" viewBox="0 0 16 16"><rect x="3.5" y=".5" width="12" height="10" fill="#d4d8e0" stroke="#9aa0a8"/><rect x="4.5" y="1.5" width="4.5" height="7" fill="#1a22b4"/><rect x="9" y="1.5" width="5.5" height="7" fill="#aab6f2"/><path d="M.5 15.5V10.5q0-3 3-3h1q3 0 3 3v5z" fill="#2a2a30"/><circle cx="3" cy="6" r="2.3" fill="#b8a07a" stroke="#333" stroke-width=".6"/><rect x=".5" y="11" width="9" height="4.5" fill="#c4d4ea" stroke="#111" stroke-width=".8"/><circle cx="11.5" cy="12" r="4" fill="#fff" stroke="#bbb" stroke-width=".6"/><path d="M11.5 9v5.2M9.3 12l2.2 2.2 2.2-2.2" stroke="#111" stroke-width="1.5" fill="none"/></svg>
<div class="t" style="left:542.5px;top:261.59px;font-size:12px;color:#000;font-weight:400;font-family:'Liberation Sans',sans-serif;letter-spacing:0.1px">Guest</div>
<div class="t" style="left:776.2px;top:261.59px;font-size:12px;color:#000;font-weight:400;font-family:'Liberation Sans',sans-serif;letter-spacing:0.02px">Built-in account for guest access t...</div>
<div class="a" style="left:1116px;top:195px;width:4px;height:600px;background:#f0f0f0"></div>
<div class="a" style="left:1120px;top:194px;width:188px;height:601px;background:#fff;border-left:2px solid #8a8a8a;border-top:2px solid #7a7a7a;border-right:1px solid #c8c8c8"></div>
<div class="a" style="left:1122px;top:196px;width:185px;height:20px;background:#f0f0f0;border-bottom:1px solid #c8c8c8"></div>
<div class="t" style="left:1126px;top:200.64px;font-size:12px;color:#000;font-weight:700;font-family:'Liberation Sans',sans-serif;letter-spacing:-0.4px">Actions</div>
<div class="a" style="left:1122px;top:217px;width:185px;height:26px;background:linear-gradient(#c4d9ee,#a9c3df)"></div>
<div class="t" style="left:1128px;top:224.84px;font-size:12px;color:#0f1f3a;font-weight:400;font-family:'Liberation Sans',sans-serif;letter-spacing:-0.5px">Users</div>
<svg class="a" style="left:1290px;top:226px;" width="11" height="7" viewBox="0 0 11 7"><path d="M0 6.5L5.5 0.5 11 6.5z" fill="#111"/></svg>
<div class="t" style="left:1152px;top:249.04px;font-size:12px;color:#000;font-weight:400;font-family:'Liberation Sans',sans-serif;letter-spacing:0.12px">More Actions</div>
<svg class="a" style="left:1293px;top:249px;" width="6" height="10" viewBox="0 0 6 10"><path d="M0.5 0L6 5 0.5 10z" fill="#111"/></svg>
<div class="a" style="left:326px;top:795px;width:983px;height:23px;background:#f0f0f0"></div>
<div class="a" style="left:1088px;top:797px;width:1px;height:18px;background:#d0d0d0"></div>
<div class="a" style="left:1221px;top:797px;width:1px;height:18px;background:#d0d0d0"></div>
<div class="a" style="left:627px;top:272px;width:380px;height:386px;background:#f0f0f0;border:1px solid #3a7cc4"></div>
<div class="a" style="left:628px;top:273px;width:378px;height:31px;background:#fff"></div>
<div class="t" style="left:636.7px;top:281.84px;font-size:12px;color:#000;font-weight:400;font-family:'Liberation Sans',sans-serif;letter-spacing:-0.42px">New User</div>
<div class="t" style="left:934.5px;top:281.00px;font-size:13px;color:#000;font-weight:400;font-family:'Liberation Sans',sans-serif;">?</div>
<svg class="a" style="left:978px;top:282px;" width="11" height="11" viewBox="0 0 11 11"><path d="M0.5 0.5l10 10M10.5 0.5l-10 10" stroke="#000" stroke-width="1.1"/></svg>
<div class="t" style="left:639.6px;top:320.07px;font-size:11.5px;color:#000;font-weight:400;font-family:'Liberation Sans',sans-serif;letter-spacing:-0.45px">User name:</div>
<div class="t" style="left:639.7px;top:350.27px;font-size:11.5px;color:#000;font-weight:400;font-family:'Liberation Sans',sans-serif;letter-spacing:-0.45px">Full name:</div>
<div class="t" style="left:639.7px;top:379.27px;font-size:11.5px;color:#000;font-weight:400;font-family:'Liberation Sans',sans-serif;letter-spacing:-0.45px">Description:</div>
<div class="t" style="left:639.7px;top:431.17px;font-size:11.5px;color:#000;font-weight:400;font-family:'Liberation Sans',sans-serif;letter-spacing:-0.45px">Password:</div>
<div class="t" style="left:638.7px;top:459.87px;font-size:11.5px;color:#000;font-weight:400;font-family:'Liberation Sans',sans-serif;letter-spacing:-0.45px">Confirm password:</div>
<div class="a" style="left:726px;top:314px;width:270px;height:23px;background:#fff;border:1px solid #7a7a7a"></div>
<div class="a" style="left:726px;top:344px;width:270px;height:23px;background:#fff;border:1px solid #7a7a7a"></div>
<div class="a" style="left:726px;top:373px;width:270px;height:23px;background:#fff;border:1px solid #7a7a7a"></div>
<div class="a" style="left:756px;top:425px;width:240px;height:23px;background:#fff;border:1px solid #7a7a7a"></div>
<div class="a" style="left:756px;top:454px;width:240px;height:23px;background:#fff;border:1px solid #3a78c0"></div>
<div class="t" style="left:729.7px;top:318.27px;font-size:11.5px;color:#000;font-weight:400;font-family:'Liberation Sans',sans-serif;letter-spacing:-0.45px">TV1</div>
<div class="a" style="left:760px;top:433px;width:5px;height:5px;background:#000;border-radius:50%"></div>
<div class="a" style="left:760px;top:462px;width:5px;height:5px;background:#000;border-radius:50%"></div>
<div class="a" style="left:766px;top:457px;width:1px;height:13px;background:#000"></div>
<div class="a" style="left:640px;top:409px;width:355px;height:1px;background:#a0a0a0"></div>
<div class="a" style="left:640px;top:410px;width:355px;height:1px;background:#fff"></div>
<div class="a" style="left:639px;top:492px;width:13px;height:13px;background:#f4f4f4;border:1px solid #cccccc"></div>
<div class="t" style="left:655.7px;top:492.07px;font-size:11.5px;color:#8d8d8d;font-weight:400;font-family:'Liberation Sans',sans-serif;letter-spacing:-0.45px">User must change password at next logon</div>
<div class="a" style="left:639px;top:513px;width:13px;height:13px;background:#fff;border:1px solid #333"></div>
<svg class="a" style="left:639px;top:513px;" width="13" height="13" viewBox="0 0 13 13"><path d="M2.5 6.5l3 3 5-6.5" stroke="#222" stroke-width="1.3" fill="none"/></svg>
<div class="t" style="left:655.7px;top:513.07px;font-size:11.5px;color:#000;font-weight:400;font-family:'Liberation Sans',sans-serif;letter-spacing:-0.45px">User cannot change password</div>
<div class="a" style="left:639px;top:534px;width:13px;height:13px;background:#fff;border:1px solid #333"></div>
<svg class="a" style="left:639px;top:534px;" width="13" height="13" viewBox="0 0 13 13"><path d="M2.5 6.5l3 3 5-6.5" stroke="#222" stroke-width="1.3" fill="none"/></svg>
<div class="t" style="left:655.7px;top:534.07px;font-size:11.5px;color:#000;font-weight:400;font-family:'Liberation Sans',sans-serif;letter-spacing:-0.45px">Password never expires</div>
<div class="a" style="left:639px;top:555px;width:13px;height:13px;background:#fff;border:1px solid #333"></div>
<div class="t" style="left:655.7px;top:555.07px;font-size:11.5px;color:#000;font-weight:400;font-family:'Liberation Sans',sans-serif;letter-spacing:-0.45px">Account is disabled</div>
<div class="a" style="left:640px;top:601px;width:355px;height:1px;background:#a0a0a0"></div>
<div class="a" style="left:640px;top:602px;width:355px;height:1px;background:#fff"></div>
<div class="a" style="left:640px;top:624px;width:73px;height:21px;background:#e1e1e1;border:1px solid #adadad"></div>
<div class="t" style="left:640px;top:629.89px;width:73px;text-align:center;font-size:11px;letter-spacing:-0.45px">Help</div>
<div class="a" style="left:841px;top:624px;width:73px;height:21px;background:#e1e1e1;border:2px solid #3a80d4"></div>
<div class="t" style="left:841px;top:629.89px;width:73px;text-align:center;font-size:11px;letter-spacing:-0.45px">Create</div>
<div class="a" style="left:922px;top:624px;width:73px;height:21px;background:#e1e1e1;border:1px solid #adadad"></div>
<div class="t" style="left:922px;top:629.89px;width:73px;text-align:center;font-size:11px;letter-spacing:-0.45px">Close</div>
<svg class="a" style="left:15px;top:10px;" width="46" height="44" viewBox="0 0 46 44"><defs><linearGradient id="pcg" x1="0" y1="0" x2="1" y2="1"><stop offset="0" stop-color="#6ccaf8"/><stop offset="1" stop-color="#34a2ee"/></linearGradient></defs><path d="M13.65 1.8L43.8 11.5V31.3L13.65 21.6z" fill="url(#pcg)"/><path d="M13.65 1.8L43.8 11.5V31.3" fill="none" stroke="#e4f6ff" stroke-width="1.3"/><path d="M20.5 30L28.9 27.7 39.25 32 30.2 34.5z" fill="#e4e2ee"/><path d="M1.7 33.9L11.4 30.6 34.7 38.1 25.3 41.7z" fill="#eef0f6"/><path d="M5 33.5l23.5 7.5M8.5 32.2l23.5 7.5M11 35l-7 2.3M16 36.8l-7 2.3M21 38.4l-7 2.3" stroke="#b8c4d8" stroke-width=".6"/></svg>
<div class="t" style="left:0;top:60.02px;width:76px;text-align:center;font-size:12.5px;color:#fff;letter-spacing:-0.7px;text-shadow:0 0 2px rgba(0,0,0,.5)">This PC</div>
<svg class="a" style="left:17px;top:112px;" width="42" height="46" viewBox="0 0 42 46"><g opacity=".92"><path d="M1.9 6.9L23.4 13.8V43.7L6.75 38.1z" fill="#c4cde2"/><path d="M23.4 13.8L39.4 7.9 35.9 37.4 23.4 43.7z" fill="#d6dbe8"/><path d="M1.9 6.9L17.2 2 39.4 7.9 23.4 13.8z" fill="#8a94b8" stroke="#eef2ff" stroke-width="1.1"/><path d="M7 33.5L23.4 37 35.6 33V37.4L23.4 43.7 6.75 38.1z" fill="#e6e6cc"/><path d="M7.5 22a5.5 5.5 0 0 1 9.5-3.5M16.5 27.5a5.5 5.5 0 0 1-8-1.5" stroke="#1a8cc4" stroke-width="2.6" fill="none"/><path d="M17.8 21.5l-.3 5-3.5-1.5z" fill="#1a70b8"/></g></svg>
<div class="t" style="left:0;top:163.92px;width:76px;text-align:center;font-size:12.5px;color:#fff;letter-spacing:-0.55px;text-shadow:0 0 2px rgba(0,0,0,.5)">Recycle Bin</div>
<svg class="a" style="left:600px;top:0px;" width="720" height="34" viewBox="0 0 720 34"><defs><linearGradient id="rdpg" x1="0" y1="0" x2="0" y2="1"><stop offset="0" stop-color="#82aee2"/><stop offset=".44" stop-color="#3f78c4"/><stop offset=".46" stop-color="#0b4a9e"/><stop offset=".94" stop-color="#0a4294"/><stop offset=".95" stop-color="#6aa8ea"/><stop offset="1" stop-color="#2a7ad0"/></linearGradient></defs><path d="M3 0H717L701 32H19z" fill="url(#rdpg)"/><path d="M3.5 0L19.5 32M716.5 0L700.5 32" stroke="#a8ccf0" stroke-width="1" opacity=".7"/></svg>
<div class="t" style="left:860px;top:7.76px;width:200px;text-align:center;font-size:16px;color:#eaf2ff;letter-spacing:-1.1px">192.168.11.195</div>
<svg class="a" style="left:655px;top:7px;" width="18" height="15" viewBox="0 0 18 15"><path d="M1 8.5h5" stroke="#fff" stroke-width="1.5"/><rect x="5" y="1" width="2.5" height="13" fill="#fff"/><rect x="7" y="5.5" width="7" height="6" fill="#fff"/><rect x="13.5" y="3" width="2.5" height="10" fill="#fff"/></svg>
<svg class="a" style="left:684px;top:5px;" width="16" height="18" viewBox="0 0 16 18"><rect x="0" y="13" width="3" height="4" fill="#fff"/><rect x="4" y="9.5" width="3" height="7.5" fill="#fff"/><rect x="8" y="5.5" width="3" height="11.5" fill="#fff"/><rect x="12" y="1" width="3" height="16" fill="#fff"/></svg>
<div class="a" style="left:1193px;top:18px;width:11px;height:3.5px;background:#fff"></div>
<svg class="a" style="left:1221px;top:6px;" width="14" height="16" viewBox="0 0 14 16"><path d="M4.5 1.5h8v8h-2" stroke="#fff" stroke-width="1.5" fill="none"/><rect x="4.5" y="1" width="8" height="2.2" fill="#fff"/><rect x="1" y="6.5" width="8.5" height="8.5" stroke="#fff" stroke-width="1.5" fill="none"/><rect x="1" y="6" width="8.5" height="2.5" fill="#fff"/></svg>
<svg class="a" style="left:1250px;top:8px;" width="14" height="13" viewBox="0 0 14 13"><path d="M1.5 1.5l11 10M12.5 1.5l-11 10" stroke="#fff" stroke-width="3"/></svg>
<svg class="a" style="left:1610px;top:905px;" width="300" height="125" viewBox="0 0 300 125"><circle cx="41.8" cy="46" r="26.5" fill="none" stroke="#782331" stroke-width="9"/><path d="M26.6 39L42.2 56.3 59.4 39 42.2 47.7z" fill="#782331"/><text x="72" y="76.6" font-family="Liberation Sans" font-weight="700" font-size="89" fill="#782331" textLength="51" lengthAdjust="spacingAndGlyphs">S</text><path d="M146.37 13.16 L159.73 13.16 L138.15 75.49 L125.48 75.49ZM162.47 16.93 L183.70 75.49 L171.23 75.49 L169.18 70.01 L143.63 70.01 L146.71 61.11 L165.89 61.11 L155.96 34.40ZM210.37 13.16 L223.73 13.16 L202.15 75.49 L189.48 75.49ZM226.47 16.93 L247.70 75.49 L235.23 75.49 L233.18 70.01 L207.63 70.01 L210.71 61.11 L229.89 61.11 L219.96 34.40ZM235.50 13.00 L285.60 13.00 L285.60 22.80 L267.30 22.80 L267.30 76.25 L253.30 76.25 L253.30 22.80 L235.50 22.80Z" fill="#782331"/></svg>
<div class="a" style="left:1616px;top:989px;width:284px;height:33px;background:#fff"></div>
<div class="t" style="left:1618.6px;top:989.22px;font-family:'Liberation Serif',serif;font-weight:700;font-size:27px;color:#6e1f30;letter-spacing:0.44px">jafari.saat@Gmail.com</div>
<div class="a" style="left:0px;top:1040px;width:1920px;height:40px;background:rgb(1,16,30)"></div>
<svg class="a" style="left:15px;top:1051px;" width="18" height="18" viewBox="0 0 18 18"><path d="M1 3L7.5 2v6.8H1zM8.5 1.8L17 .5v8.3H8.5zM1 9.8h6.5v6.8L1 15.7zM8.5 9.8H17v8.3l-8.5-1.2z" fill="#fff"/></svg>
<svg class="a" style="left:61px;top:1052px;" width="22" height="16" viewBox="0 0 22 16"><rect x="5.5" y="1.5" width="11" height="13" stroke="#fff" stroke-width="1.3" fill="none"/><path d="M3.5 4H1.3v8h2.2M18.5 4h2.2v8h-2.2" stroke="#fff" stroke-width="1.3" fill="none"/></svg>
<svg class="a" style="left:111px;top:1050px;" width="24" height="20" viewBox="0 0 24 20"><path d="M1 1h8l2 2h12v16H1z" fill="#f5d67a"/><path d="M1 5h22" stroke="#e8c060" stroke-width="1"/><path d="M6 19v-6a2 2 0 0 1 2-2h8a2 2 0 0 1 2 2v6h-3v-4H9v4z" fill="#3aa8e0"/></svg>
<div class="a" style="left:103px;top:1077px;width:40px;height:3px;background:#8cc4f4"></div>
<div class="a" style="left:148px;top:1040px;width:48px;height:40px;background:#383c46"></div>
<div class="a" style="left:148px;top:1077px;width:48px;height:3px;background:#8cc4f4"></div>
<svg class="a" style="left:159px;top:1047px;" width="25" height="25" viewBox="0 0 25 25"><path d="M8 1l15 3-2 16-13-3z" fill="#dfe6f4" stroke="#a8b4c8"/><path d="M9.5 3L21 5.5l-1.5 12L9 15z" fill="#2a3acc"/><path d="M13 4v11l5 1.5" fill="#8a9af0"/><path d="M1 14l9 -2 12 6-8 6L1 20z" fill="#d8dce4" stroke="#9aa0ac" stroke-width=".8"/></svg>
<svg class="a" style="left:1694px;top:1053px;" width="18" height="16" viewBox="0 0 18 16"><rect x="1" y="1" width="4.5" height="4" stroke="#fff" stroke-width="1" fill="none"/><path d="M3 5v8h4M5.5 2.5h11v7" stroke="#fff" stroke-width="1" fill="none"/><path d="M11 14.5l3.5-7 3.5 7z" fill="#f5c518"/><path d="M14.5 10v2.5" stroke="#000" stroke-width="1"/></svg>
<svg class="a" style="left:1718px;top:1053px;" width="18" height="16" viewBox="0 0 18 16"><path d="M1 5h3l4-4v13l-4-4H1z" stroke="#fff" stroke-width="1.1" fill="none"/><circle cx="13" cy="11.5" r="4.5" fill="#d0293a"/><path d="M11 9.5l4 4M15 9.5l-4 4" stroke="#fff" stroke-width="1.3"/></svg>
<svg class="a" style="left:1746px;top:1051px;" width="18" height="18" viewBox="0 0 18 18"><path d="M6 12l7-10 2.5 1.8-7 10-3 1.5z" stroke="#fff" stroke-width="1.2" fill="none"/><path d="M5 13a3 3 0 1 0 -2 4M14 8a2 2 0 0 1 2 3" stroke="#fff" stroke-width="1.2" fill="none"/></svg>
<svg class="a" style="left:1775px;top:1053px;" width="24" height="14" viewBox="0 0 24 14"><rect x=".7" y=".7" width="22" height="12" stroke="#fff" stroke-width="1.2" fill="none"/><path d="M3 4h18M3 6.7h18" stroke="#fff" stroke-width="1" stroke-dasharray="1.5 1"/><path d="M6 9.5h12" stroke="#fff" stroke-width="1.2"/></svg>
<div class="t" style="left:1800px;top:1044.59px;width:70px;text-align:center;font-size:12px;color:#fff;letter-spacing:-0.33px">2:23 PM</div>
<div class="t" style="left:1800px;top:1062.59px;width:70px;text-align:center;font-size:12px;color:#fff;letter-spacing:-0.35px">7/18/2021</div>
<svg class="a" style="left:1878px;top:1051px;" width="26" height="26" viewBox="0 0 26 26"><path d="M1.5 1.5h14v11h-8l-3 3v-3h-3z" fill="#fff"/><path d="M4 4.5h9M4 7h9M4 9.5h7" stroke="#0a0f1b" stroke-width="1.1"/><circle cx="16.5" cy="16" r="6.5" fill="#2a2e36" stroke="#9aa0a8" stroke-width="1.2"/><path d="M15.5 13l2-1v8" stroke="#fff" stroke-width="1.6" fill="none"/></svg>
<div class="a" style="left:1915px;top:1040px;width:1px;height:40px;background:#5a5e66"></div>
</body></html>
